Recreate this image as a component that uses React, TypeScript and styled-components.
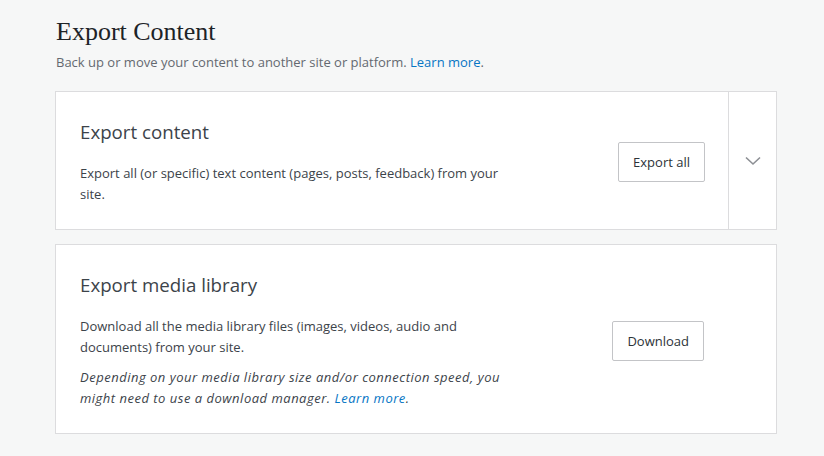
import React from "react";
import styled, { createGlobalStyle } from "styled-components";

const Global = createGlobalStyle`
  html, body { margin: 0; padding: 0; background: #f6f7f7; }
  body { font-family: "Open Sans", "Noto Sans", sans-serif; color: #3c434a; }
`;

const Page = styled.div`
  padding: 16px 47px 0 55px;
  display: flex;
  flex-direction: column;
`;

const Header = styled.header`
  padding-left: 1px;
  margin-bottom: 19px;
`;

const PageTitle = styled.h1`
  margin: 0;
  font-family: "Liberation Serif", "DejaVu Serif", serif;
  font-weight: 400;
  font-size: 26px;
  line-height: 32px;
  color: #1d2327;
`;

const Subtitle = styled.p`
  margin: 4px 0 0;
  font-size: 13px;
  line-height: 20px;
  color: #646970;
`;

const Link = styled.a`
  color: #0675c4;
  text-decoration: none;
`;

const Cards = styled.div`
  display: flex;
  flex-direction: column;
  gap: 14px;
`;

const Card = styled.section`
  display: flex;
  background: #fff;
  border: 1px solid #dcdcde;
`;

const Main = styled.div<{ $padRight: number }>`
  flex: 1;
  display: flex;
  align-items: center;
  padding: 27px ${(p) => p.$padRight}px 24px 24px;
`;

const Text = styled.div`
  flex: 1;
  max-width: 428px;
`;

const CardTitle = styled.h2`
  margin: 0 0 18px;
  font-size: 18.7px;
  font-weight: 400;
  line-height: 26px;
  color: #3c434a;
`;

const Para = styled.p<{ $italic?: boolean }>`
  margin: 0 0 9px;
  font-size: 13px;
  line-height: 21px;
  color: #3c434a;
  font-style: ${(p) => (p.$italic ? "italic" : "normal")};
  letter-spacing: ${(p) => (p.$italic ? "0.5px" : "normal")};
  &:last-child { margin-bottom: 0; }
`;

const Button = styled.button`
  margin-left: auto;
  height: 40px;
  padding: 0 14px;
  background: #fff;
  border: 1px solid #c3c4c7;
  border-radius: 2px;
  font-family: "Open Sans", "Noto Sans", sans-serif;
  font-size: 13px;
  color: #2c3338;
  cursor: pointer;
`;

const Toggle = styled.button`
  width: 48px;
  border: none;
  border-left: 1px solid #dcdcde;
  background: #fff;
  display: flex;
  align-items: center;
  justify-content: center;
  padding: 0;
  cursor: pointer;
`;

export default function App() {
  return (
    <>
      <Global />
      <Page>
        <Header>
          <PageTitle>Export Content</PageTitle>
          <Subtitle>
            Back up or move your content to another site or platform.{" "}
            <Link href="#">Learn more</Link>.
          </Subtitle>
        </Header>
        <Cards>
          <Card>
            <Main $padRight={23}>
              <Text>
                <CardTitle>Export content</CardTitle>
                <Para>
                  Export all (or specific) text content (pages, posts, feedback) from your site.
                </Para>
              </Text>
              <Button>Export all</Button>
            </Main>
            <Toggle aria-label="Expand">
              <svg width="16" height="10" viewBox="0 0 16 10" fill="none">
                <path d="M1 1.5 L8 8 L15 1.5" stroke="#8c8f94" strokeWidth="1.6" />
              </svg>
            </Toggle>
          </Card>
          <Card>
            <Main $padRight={72}>
              <Text>
                <CardTitle>Export media library</CardTitle>
                <Para>
                  Download all the media library files (images, videos, audio and documents) from your site.
                </Para>
                <Para $italic>
                  Depending on your media library size and/or connection speed, you might need to use a download manager.{" "}
                  <Link href="#">Learn more</Link>.
                </Para>
              </Text>
              <Button>Download</Button>
            </Main>
          </Card>
        </Cards>
      </Page>
    </>
  );
}
